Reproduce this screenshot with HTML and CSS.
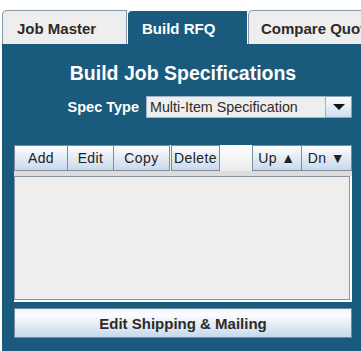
FILE: index.html
```html
<!DOCTYPE html>
<html lang="en">
<head>
  <meta charset="UTF-8" />
  <title>Build RFQ</title>
  <link rel="stylesheet" href="styles.css">
</head>
<body>

  <div class="tabs">
    <div class="tab">Job Master</div>
    <div class="tab active">Build RFQ</div>
    <div class="tab last">Compare Quot</div>
  </div>

  <div class="panel">
    <h1>Build Job Specifications</h1>

    <div class="spec-row">
      <label>Spec Type</label>
      <div class="combo">
        <div class="combo-text">Multi-Item Specification</div>
        <div class="combo-btn"><span class="arrow"></span></div>
      </div>
    </div>

    <!-- toolbar for the spec list -->
    <div class="toolbar">
      <button class="tb add">Add</button>
      <button class="tb edit">Edit</button>
      <button class="tb copy">Copy</button>
      <button class="tb del">Delete</button>
      <div class="spacer"></div>
      <button class="tb up">Up <span class="tri">&#9650;</span></button>
      <button class="tb dn">Dn <span class="tri">&#9660;</span></button>
    </div>

    <div class="list"></div>

    <button class="big-btn">Edit Shipping &amp; Mailing</button>
  </div>

</body>
</html>
```

FILE: styles.css
```css
body {
  margin: 0;
  padding: 0;
  background-color: #ffffff;
  font-family: 'Liberation Sans', Arial, sans-serif;
  overflow: hidden;
}

.tabs {
  display: flex;
  height: 34px;
  margin-top: 10px;
  padding-left: 2px;
  white-space: nowrap;
  overflow: hidden;
}

.tab {
  box-sizing: border-box;
  flex-shrink: 0;
  width: 125px;
  height: 34px;
  padding: 9px 0 0 14px;
  background-color: #eeeeee;
  border: 1px solid #8797a7;
  border-bottom: none;
  border-top-left-radius: 5px;
  font-size: 15px;
  font-weight: bold;
  color: #2e2a28;
}

.tab.active {
  width: 121px;
  background-color: #1a5a7c;
  border-color: #ffffff;
  color: #ffffff;
}

.tab.last {
  width: 113px;
  padding-left: 12px;
  border-right: none;
}

.panel {
  box-sizing: border-box;
  height: 307px;
  margin-left: 2px;
  padding: 17px 9px 0 12px;
  background-color: #1a5a7c;
}

h1 {
  margin: 0;
  height: 24px;
  text-align: center;
  font-size: 19.5px;
  line-height: 24px;
  color: #ffffff;
}

.spec-row {
  display: flex;
  justify-content: flex-end;
  align-items: center;
  margin-top: 11px;
  height: 22px;
}

.spec-row label {
  margin-right: 7px;
  font-size: 14.5px;
  font-weight: bold;
  color: #ffffff;
}

.combo {
  display: flex;
  height: 22px;
  width: 206px;
}

.combo-text {
  box-sizing: border-box;
  flex: 1;
  height: 22px;
  padding: 2px 0 0 3px;
  background-color: #eeeeee;
  border: 1px solid #9db3c8;
  font-size: 14.3px;
  color: #2e2a28;
}

.combo-btn {
  box-sizing: border-box;
  width: 26px;
  height: 22px;
  display: flex;
  align-items: center;
  justify-content: center;
  border: 1px solid #8ea3b8;
  border-left: none;
  background: linear-gradient(#fbfcfe, #cfdeec);
}

.arrow {
  width: 0;
  height: 0;
  border-left: 6px solid transparent;
  border-right: 6px solid transparent;
  border-top: 6px solid #111111;
}

.toolbar {
  display: flex;
  height: 26px;
  margin-top: 27px;
  background: linear-gradient(#ffffff, #eaeaea);
  border-bottom: 5px solid #dddddd;
}

.tb {
  box-sizing: border-box;
  height: 26px;
  margin: 0;
  padding: 0;
  background: linear-gradient(#fdfdfe, #c9d9ea);
  border: 1px solid #7d8d9d;
  font-family: 'Liberation Sans', Arial, sans-serif;
  font-size: 14px;
  letter-spacing: 0.4px;
  color: #222222;
}

.tb + .tb {
  border-left: none;
}

.add { width: 54px; }
.edit { width: 46px; }
.copy { width: 56px; }
.del { width: 49px; border-left: 1px solid #7d8d9d !important; margin-left: 1px; }
.up { width: 50px; }
.dn { width: 50px; }

.spacer {
  flex: 1;
}

.tri {
  font-size: 14px;
}

.list {
  box-sizing: border-box;
  height: 124px;
  margin-right: 2px;
  background-color: #eeeeee;
  border: 1px solid #8a97a3;
  box-shadow: 1px 1px 0 1px #ffffff;
}

.big-btn {
  box-sizing: border-box;
  display: block;
  width: 100%;
  height: 30px;
  margin-top: 8px;
  background: linear-gradient(#eef3fa, #fbfdff 20%, #c7d9eb);
  border: 1px solid #7a8b9c;
  font-family: 'Liberation Sans', Arial, sans-serif;
  font-size: 15px;
  font-weight: bold;
  color: #2e2a28;
}
```
